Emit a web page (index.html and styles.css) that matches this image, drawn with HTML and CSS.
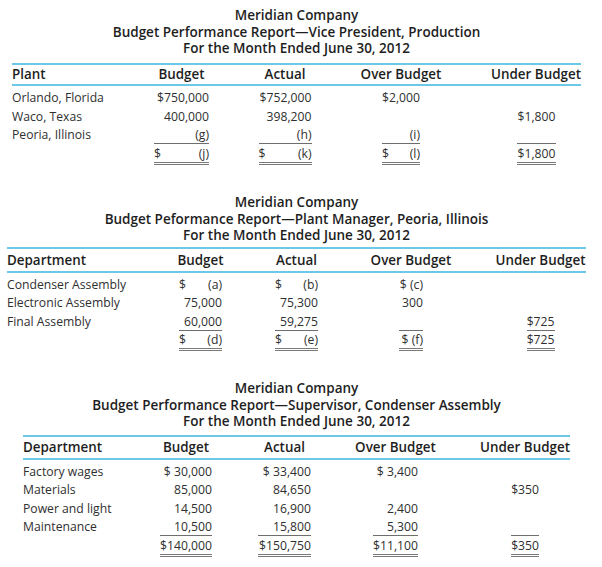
FILE: index.html
```html
<!DOCTYPE html>
<html>
<head>
<meta charset="utf-8">
<link rel="stylesheet" href="styles.css">
</head>
<body>
<section class="report r1">
  <div class="title">
    <div>Meridian Company</div>
    <div>Budget Performance Report—Vice President, Production</div>
    <div>For the Month Ended June 30, 2012</div>
  </div>
  <div class="head">
    <div class="grid">
      <div class="h cl">Plant</div>
      <div class="h cb">Budget</div>
      <div class="h ca">Actual</div>
      <div class="h co">Over Budget</div>
      <div class="h cu">Under Budget</div>
    </div>
  </div>
  <div class="body grid">
    <div class="cell cl">Orlando, Florida</div>
    <div class="cell n cb">$750,000</div>
    <div class="cell n ca">$752,000</div>
    <div class="cell n co">$2,000</div>
    <div class="cell n cu"></div>

    <div class="cell cl">Waco, Texas</div>
    <div class="cell n cb">400,000</div>
    <div class="cell n ca">398,200</div>
    <div class="cell n co"></div>
    <div class="cell n cu">$1,800</div>

    <div class="cell cl">Peoria, Illinois</div>
    <div class="cell n cb ul">(g)</div>
    <div class="cell n ca ul">(h)</div>
    <div class="cell n co ul">(i)</div>
    <div class="cell n cu ul"></div>

    <div class="cell cl"></div>
    <div class="cell n cb dbl split"><span>$</span><span>(j)</span></div>
    <div class="cell n ca dbl split"><span>$</span><span>(k)</span></div>
    <div class="cell n co dbl split"><span>$</span><span>(l)</span></div>
    <div class="cell n cu dbl">$1,800</div>
  </div>
</section>

<section class="report r2">
  <div class="title">
    <div>Meridian Company</div>
    <div>Budget Peformance Report—Plant Manager, Peoria, Illinois</div>
    <div>For the Month Ended June 30, 2012</div>
  </div>
  <div class="head">
    <div class="grid">
      <div class="h cl">Department</div>
      <div class="h cb">Budget</div>
      <div class="h ca">Actual</div>
      <div class="h co">Over Budget</div>
      <div class="h cu">Under Budget</div>
    </div>
  </div>
  <div class="body grid">
    <div class="cell cl">Condenser Assembly</div>
    <div class="cell n cb split"><span>$</span><span>(a)</span></div>
    <div class="cell n ca split"><span>$</span><span>(b)</span></div>
    <div class="cell n co">$ (c)</div>
    <div class="cell n cu"></div>

    <div class="cell cl">Electronic Assembly</div>
    <div class="cell n cb">75,000</div>
    <div class="cell n ca">75,300</div>
    <div class="cell n co">300</div>
    <div class="cell n cu"></div>

    <div class="cell cl">Final Assembly</div>
    <div class="cell n cb ul">60,000</div>
    <div class="cell n ca ul">59,275</div>
    <div class="cell n co ul"></div>
    <div class="cell n cu ul">$725</div>

    <div class="cell cl"></div>
    <div class="cell n cb dbl split"><span>$</span><span>(d)</span></div>
    <div class="cell n ca dbl split"><span>$</span><span>(e)</span></div>
    <div class="cell n co dbl">$ (f)</div>
    <div class="cell n cu dbl">$725</div>
  </div>
</section>

<section class="report r3">
  <div class="title">
    <div>Meridian Company</div>
    <div>Budget Performance Report—Supervisor, Condenser Assembly</div>
    <div>For the Month Ended June 30, 2012</div>
  </div>
  <div class="head">
    <div class="grid">
      <div class="h cl">Department</div>
      <div class="h cb">Budget</div>
      <div class="h ca">Actual</div>
      <div class="h co">Over Budget</div>
      <div class="h cu">Under Budget</div>
    </div>
  </div>
  <div class="body grid">
    <div class="cell cl">Factory wages</div>
    <div class="cell n cb">$ 30,000</div>
    <div class="cell n ca">$ 33,400</div>
    <div class="cell n co">$ 3,400</div>
    <div class="cell n cu"></div>

    <div class="cell cl">Materials</div>
    <div class="cell n cb">85,000</div>
    <div class="cell n ca">84,650</div>
    <div class="cell n co"></div>
    <div class="cell n cu">$350</div>

    <div class="cell cl">Power and light</div>
    <div class="cell n cb">14,500</div>
    <div class="cell n ca">16,900</div>
    <div class="cell n co">2,400</div>
    <div class="cell n cu"></div>

    <div class="cell cl">Maintenance</div>
    <div class="cell n cb ul">10,500</div>
    <div class="cell n ca ul">15,800</div>
    <div class="cell n co ul">5,300</div>
    <div class="cell n cu ul"></div>

    <div class="cell cl"></div>
    <div class="cell n cb dbl">$140,000</div>
    <div class="cell n ca dbl">$150,750</div>
    <div class="cell n co dbl">$11,100</div>
    <div class="cell n cu dbl">$350</div>
  </div>
</section>
</body>
</html>
```

FILE: styles.css
```css
body {
  margin: 0;
  background: #ffffff;
  font-family: "Open Sans", "Noto Sans", sans-serif;
  color: #2f2f2f;
}

.r1 { margin: 0 21px 0 12px; padding-top: 7px; }
.r2 { margin: 29px 16px 0 7px; }
.r3 { margin: 29px 32px 0 23px; }

.title {
  text-align: center;
  font-weight: 600;
  font-size: 13.5px;
  line-height: 16.5px;
  color: #1e1e1e;
  white-space: nowrap;
}
.title > div { height: 16.5px; }
.r1 .title { margin-bottom: 6px; }
.r2 .title { margin-bottom: 3px; }
.r3 .title { margin-bottom: 5.5px; }

.head {
  border-top: 2px solid #6cc8e6;
  border-bottom: 2px solid #6cc8e6;
}

.grid { display: grid; }
.r1 .grid { grid-template-columns: 100px 139px 68px 164px 106px; }
.r2 .grid { grid-template-columns: 130px 127px 65px 164px 95px; }
.r3 .grid { grid-template-columns: 100px 126px 71px 151px 108px; }

.h {
  font-weight: 600;
  font-size: 13.4px;
  line-height: 19px;
  color: #1e1e1e;
  white-space: nowrap;
  justify-self: center;
}
.r2 .h { line-height: 22px; }
.r3 .h { line-height: 21px; }
.h.cl { justify-self: start; }

.cl { grid-column: 1; }
.cb { grid-column: 2; }
.ca { grid-column: 3; }
.co { grid-column: 4; }
.cu { grid-column: 5; }

.body { padding-top: 2.5px; }
.r3 .body { padding-top: 2px; }

.cell {
  box-sizing: border-box;
  height: 18.5px;
  font-size: 12.2px;
  line-height: 17px;
  padding-top: 0.5px;
  border-bottom: 1px solid transparent;
  white-space: nowrap;
}
.r1 .cell { height: 18.8px; padding-top: 0.8px; }
.n { justify-self: center; text-align: right; }
.ul { border-bottom-color: #6e6e6e; }
.dbl { height: 20.5px; border-bottom: 3px double #7a7a7a; }
.r1 .dbl { height: 20.8px; }
.split { display: flex; justify-content: space-between; }

.r1 .body .cb { width: 55px; }
.r1 .body .ca { width: 53px; }
.r1 .body .co { width: 38px; }
.r1 .body .cu { width: 39px; }

.r2 .body .cb { width: 43px; }
.r2 .body .ca { width: 43px; }
.r2 .body .co { width: 24px; }
.r2 .body .cu { width: 28px; }

.r3 .body .cb { width: 52px; }
.r3 .body .ca { width: 53px; }
.r3 .body .co { width: 45px; }
.r3 .body .cu { width: 28px; }
```
